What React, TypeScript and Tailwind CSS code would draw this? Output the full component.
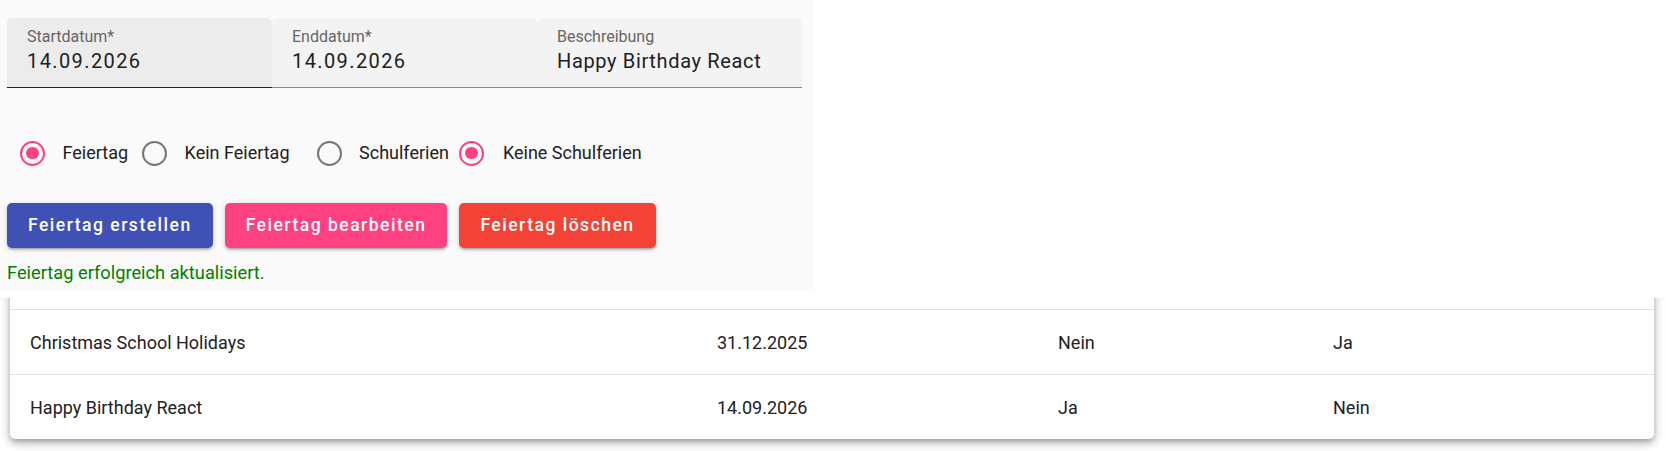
import React from "react";

const font = { fontFamily: "Roboto, 'Noto Sans', Arial, sans-serif" };

function Field({ label, value, active, tracking }: { label: string; value: string; active?: boolean; tracking: string }) {
  return (
    <div
      className={
        "w-[265px] h-[70px] rounded-t-[5px] px-[20px] pt-[11px] border-b " +
        (active ? "bg-[#ececec] border-[#212121]" : "bg-[#f3f3f3] border-[#8c8c8c]")
      }
    >
      <div className="text-[16px] leading-[16px] text-[#666666]">{label}</div>
      <div className={"mt-[6px] text-[20px] leading-[20px] text-[#212121] " + tracking}>{value}</div>
    </div>
  );
}

function Radio({ label, checked, ml, mr, gap }: { label: string; checked?: boolean; ml: string; mr: string; gap: string }) {
  return (
    <div className={"flex items-center " + ml + " " + mr}>
      <div
        className={
          "w-[25px] h-[25px] rounded-full border-[2.5px] flex items-center justify-center " +
          (checked ? "border-[#ff4081]" : "border-[#757575]")
        }
      >
        {checked && <div className="w-[12.5px] h-[12.5px] rounded-full bg-[#ff4081]" />}
      </div>
      <span className={"text-[18px] leading-[20px] text-[#212121] " + gap}>{label}</span>
    </div>
  );
}

function Btn({ children, color }: { children: React.ReactNode; color: string }) {
  return (
    <button
      className={
        "h-[45px] px-[21px] rounded-[5px] text-white text-[17.5px] font-medium tracking-[1.5px] shadow-[0_3px_2px_-2px_rgba(0,0,0,0.2),0_2px_3px_0_rgba(0,0,0,0.14),0_1px_6px_0_rgba(0,0,0,0.12)] " +
        color
      }
    >
      {children}
    </button>
  );
}

function Row({ cells }: { cells: string[] }) {
  return (
    <div className="grid grid-cols-[687px_341px_275px_1fr] items-center h-[65px] text-[18px] text-[#212121] border-t border-[#e0e0e0]">
      {cells.map((c, i) => (
        <div key={i} className="px-[20px]">
          {c}
        </div>
      ))}
    </div>
  );
}

export default function App() {
  return (
    <div className="relative w-[1666px] h-[451px] bg-white overflow-hidden" style={font}>
      <div className="absolute top-0 left-0 z-10 w-[813px] h-[290px] bg-[#fafafa] pl-[7px] pt-[18px]">
        <div className="flex">
          <Field label="Startdatum*" value="14.09.2026" active tracking="tracking-[1.4px]" />
          <Field label="Enddatum*" value="14.09.2026" tracking="tracking-[1.4px]" />
          <Field label="Beschreibung" value="Happy Birthday React" tracking="tracking-[0.65px]" />
        </div>
        <div className="flex items-center h-[44px] mt-[43px]">
          <Radio label="Feiertag" checked ml="ml-[13px]" mr="mr-[14px]" gap="ml-[17.5px]" />
          <Radio label="Kein Feiertag" ml="ml-0" mr="mr-[27px]" gap="ml-[17.5px]" />
          <Radio label="Schulferien" ml="ml-0" mr="mr-[10px]" gap="ml-[17.5px]" />
          <Radio label="Keine Schulferien" checked ml="ml-0" mr="mr-0" gap="ml-[19px]" />
        </div>
        <div className="flex gap-[12px] mt-[28px]">
          <Btn color="bg-[#3f51b5]">Feiertag erstellen</Btn>
          <Btn color="bg-[#ff4081]">Feiertag bearbeiten</Btn>
          <Btn color="bg-[#f44336]">Feiertag löschen</Btn>
        </div>
        <div className="mt-[16px] text-[18.25px] leading-[18px] text-[#008000]">Feiertag erfolgreich aktualisiert.</div>
      </div>

      <div className="mt-[298px] overflow-hidden pb-[20px]">
        <div className="-mt-[30px] ml-[10px] w-[1644px] bg-white rounded-b-[5px] shadow-[0_3px_5px_-1px_rgba(0,0,0,0.22),0_5px_8px_0_rgba(0,0,0,0.16),0_1px_14px_0_rgba(0,0,0,0.14)]">
          <div className="h-[41px]" />
          <Row cells={["Christmas School Holidays", "31.12.2025", "Nein", "Ja"]} />
          <Row cells={["Happy Birthday React", "14.09.2026", "Ja", "Nein"]} />
        </div>
      </div>
    </div>
  );
}
